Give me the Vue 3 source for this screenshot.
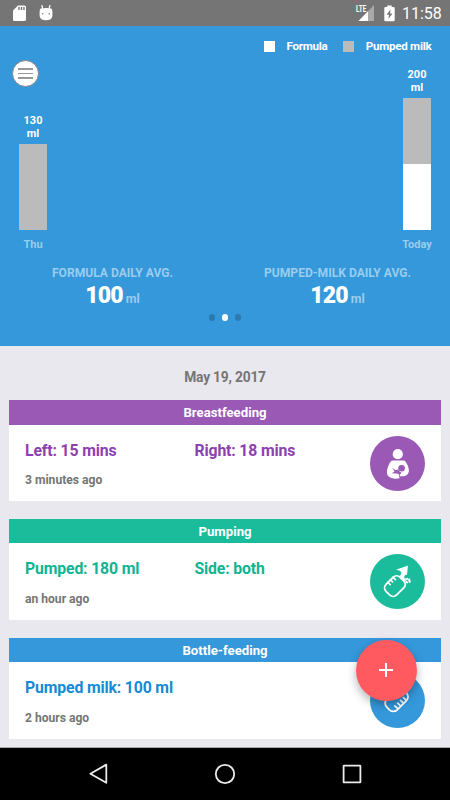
<script setup>
import { ref } from 'vue';

const legend = [
    { label: 'Formula', color: '#ffffff' },
    { label: 'Pumped milk', color: '#bbbbbb' },
];

// Segment heights are listed from top to bottom
const bars = [
    { day: 'Thu', amount: 130, segments: [{ color: '#bbbbbb', height: 85.5 }] },
    {
        day: 'Today',
        amount: 200,
        segments: [
            { color: '#bbbbbb', height: 66 },
            { color: '#ffffff', height: 65.5 },
        ],
    },
];

const averages = [
    { title: 'FORMULA DAILY AVG.', value: 100 },
    { title: 'PUMPED-MILK DAILY AVG.', value: 120 },
];

const activePage = ref(1);

const entries = [
    { type: 'breast', title: 'Breastfeeding', left: 'Left: 15 mins', right: 'Right: 18 mins', time: '3 minutes ago' },
    { type: 'pump', title: 'Pumping', left: 'Pumped: 180 ml', right: 'Side: both', time: 'an hour ago' },
    { type: 'bottle', title: 'Bottle-feeding', left: 'Pumped milk: 100 ml', right: '', time: '2 hours ago' },
];
</script>

<template>
    <div class="screen">
        <header class="status-bar">
            <svg class="sd" width="14" height="17" viewBox="0 0 14 17">
                <path d="M5 0.5H11.5Q13 0.5 13 2V14.5Q13 16 11.5 16H1.5Q0 16 0 14.5V5.5Z" fill="#fff" />
                <path d="M6 2v3M8.5 2v3M11 2v3" stroke="#757575" stroke-width="1.4" />
            </svg>
            <svg class="droid" width="14" height="17" viewBox="0 0 14 17">
                <path d="M2.8 0L3.8 4M11 0L10 4" stroke="#fff" stroke-width="1.2" />
                <path d="M1.6 3.6Q7 2.4 12.4 3.6Q13.4 4.4 13.4 7V11Q13 15.2 7 15.2Q1 15.2 0.6 11V7Q0.6 4.4 1.6 3.6Z" fill="#fff" />
                <circle cx="3.8" cy="8.7" r="0.8" fill="#757575" />
                <circle cx="10.2" cy="8.7" r="0.8" fill="#757575" />
            </svg>
            <svg class="signal" width="20" height="18" viewBox="0 0 20 18">
                <path d="M19 1V17H3.5Z" fill="#a9a9a9" />
                <path d="M13 7.2V17H3.5Z" fill="#fff" />
                <rect x="0" y="0" width="10.7" height="8.2" fill="#757575" />
                <text x="1" y="7.6" class="lte" textLength="10.2" lengthAdjust="spacingAndGlyphs">LTE</text>
            </svg>
            <svg class="battery" width="11" height="17" viewBox="0 0 11 17">
                <path d="M3.3 0.5H7.7V2H9.5Q10.7 2 10.7 3.2V15Q10.7 16.3 9.5 16.3H1.5Q0.3 16.3 0.3 15V3.2Q0.3 2 1.5 2H3.3Z" fill="#fff" />
                <path d="M6.6 4.2L2.6 9.8H5.1L4.4 14L8.5 8.4H6Z" fill="#757575" />
            </svg>
            <span class="clock">11:58</span>
        </header>

        <section class="hero">
            <button class="menu">
                <i></i><i></i><i></i>
            </button>
            <div class="legend">
                <span v-for="item in legend" :key="item.label" class="legend-item">
                    <span class="swatch" :style="{ background: item.color }"></span>
                    {{ item.label }}
                </span>
            </div>
            <div class="chart">
                <div v-for="bar in bars" :key="bar.day" class="bar">
                    <div class="bar-value">{{ bar.amount }}<br>ml</div>
                    <div
                        v-for="(segment, i) in bar.segments"
                        :key="i"
                        class="segment"
                        :style="{ height: segment.height + 'px', background: segment.color }"
                    ></div>
                    <div class="bar-day">{{ bar.day }}</div>
                </div>
            </div>
            <div class="averages">
                <div v-for="avg in averages" :key="avg.title" class="average">
                    <div class="avg-title">{{ avg.title }}</div>
                    <div class="avg-value"><b>{{ avg.value }}</b> ml</div>
                </div>
            </div>
            <div class="dots">
                <span v-for="n in 3" :key="n" class="dot" :class="{ active: n - 1 === activePage }"></span>
            </div>
        </section>

        <main class="timeline">
            <h2 class="date">May 19, 2017</h2>
            <article v-for="entry in entries" :key="entry.type" class="card" :class="entry.type">
                <h3 class="card-title">{{ entry.title }}</h3>
                <div class="card-body">
                    <div class="facts">
                        <div class="fact-row">
                            <span class="fact">{{ entry.left }}</span>
                            <span class="fact">{{ entry.right }}</span>
                        </div>
                        <div class="time">{{ entry.time }}</div>
                    </div>
                    <svg class="badge" width="55" height="55" viewBox="0 0 55 55">
                        <circle cx="27.5" cy="27.5" r="27.5" class="badge-bg" />
                        <g v-if="entry.type === 'breast'">
                            <circle cx="27.8" cy="18.2" r="5.1" fill="#fff" />
                            <path d="M22.5 24.5H33.5C36 24.5 38.9 31 38.9 34.5C38.9 38 36.5 40 33.5 40.2L29 40.3L30.3 42C27 43 23.5 42.8 21.5 42C18.5 41 16.7 39 16.9 36C17.1 32 20 24.5 22.5 24.5Z" fill="#fff" />
                            <circle cx="31.6" cy="32.2" r="3.3" class="badge-bg" />
                            <path d="M22 31.8L25.6 34.3L28.2 33.6Q29 35.8 31.6 36.7L29.4 39.3Q28.6 37.4 26.5 37.6L21.8 37.3L24.6 35.4Z" class="badge-bg" />
                            <path d="M29.2 38.8L30.2 42.6" class="badge-line" />
                        </g>
                        <g v-else-if="entry.type === 'pump'" fill="none" stroke="#fff" stroke-linecap="round">
                            <rect x="-10" y="-7.5" width="20" height="15" rx="5" transform="translate(24.9 32.1) rotate(-45)" stroke-width="1.8" />
                            <path d="M17.6 28.2l2.6 2.4M20.3 25.6l2.3 2.2M23.1 23.3l2.4 2.3" stroke-width="1.6" />
                            <path d="M26 15.8L38 11.5L37 20.8Q34.8 20.2 34.4 22.4L34 26L29.6 22.5Q31.8 20 31.2 18Q30 16.2 26 15.8Z" fill="#fff" stroke="none" />
                            <path d="M30.2 22L35.4 27" stroke-width="2.6" stroke-linecap="butt" />
                            <path d="M35.8 27.2L37.8 29M35.4 25.2L38 24.8M38.8 24.6L40 28.6" stroke-width="2" stroke-linecap="butt" />
                        </g>
                        <g v-else fill="none" stroke="#fff" stroke-linecap="round">
                            <rect x="-12" y="-7.4" width="24" height="14.8" rx="5.5" transform="translate(26.6 27) rotate(-45)" stroke-width="1.8" />
                            <path d="M27.3 35.2l-2.5-2.3M30.2 32.5l-2.5-2.4M33 29.6l-2.5-2.3M35.8 26.9l-2.4-2.2" stroke-width="1.7" />
                        </g>
                    </svg>
                </div>
            </article>
        </main>

        <button class="fab">
            <svg width="14" height="14" viewBox="0 0 14 14">
                <path d="M7 0V14M0 7H14" stroke="#fff" stroke-width="2" />
            </svg>
        </button>

        <nav class="nav-bar">
            <svg width="22" height="22" viewBox="0 0 22 22">
                <path d="M18.3 1.6V19.8L2.4 10.7Z" />
            </svg>
            <svg width="22" height="22" viewBox="0 0 22 22">
                <circle cx="11" cy="11" r="9.2" />
            </svg>
            <svg width="22" height="22" viewBox="0 0 22 22">
                <rect x="2.6" y="2.6" width="16.8" height="16.8" rx="0.5" />
            </svg>
        </nav>
    </div>
</template>

<style>
body {
    margin: 0;
}
</style>

<style scoped>
.screen {
    position: relative;
    width: 450px;
    height: 800px;
    overflow: hidden;
    display: flex;
    flex-direction: column;
    background: #e9e8ee;
    font-family: Roboto, 'Liberation Sans', sans-serif;
    font-weight: 700;
}

.status-bar {
    height: 26px;
    flex-shrink: 0;
    box-sizing: border-box;
    display: flex;
    align-items: center;
    padding: 0 9px 0 13px;
    background: #757575;
    color: #fff;
}

.droid {
    margin-left: 12px;
}

.signal {
    margin-left: auto;
}

.lte {
    font-size: 9px;
    font-weight: 700;
    fill: #fff;
}

.battery {
    margin: 0 7.5px 0 8.5px;
}

.clock {
    width: 39px;
    font-size: 16px;
    font-weight: 400;
    line-height: 26px;
    padding-top: 2px;
    text-align: right;
}

.hero {
    position: relative;
    height: 320px;
    flex-shrink: 0;
    background: #3498db;
    color: #fff;
}

/* Floats over the chart */
.menu {
    position: absolute;
    left: 11.5px;
    top: 34px;
    width: 27px;
    height: 27px;
    box-sizing: border-box;
    padding: 0;
    border: 1px solid #858585;
    border-radius: 50%;
    background: #fff;
    display: flex;
    flex-direction: column;
    align-items: center;
    justify-content: center;
    gap: 3px;
}

.menu i {
    width: 15px;
    height: 1.4px;
    background: #999;
}

.legend {
    display: flex;
    justify-content: flex-end;
    gap: 16px;
    padding: 14px 18.5px 0 0;
    height: 13px;
    font-size: 11.6px;
    line-height: 13px;
    letter-spacing: -0.25px;
}

.legend-item {
    display: flex;
    align-items: center;
    gap: 11.2px;
}

.swatch {
    width: 11px;
    height: 11px;
}

.chart {
    height: 198px;
    display: flex;
    justify-content: space-between;
    align-items: flex-end;
    padding: 0 13px;
}

.bar {
    width: 40px;
    display: flex;
    flex-direction: column;
    align-items: center;
    font-size: 11px;
    line-height: 13px;
    text-align: center;
}

.bar-value {
    margin-bottom: 4.5px;
}

.segment {
    width: 27.5px;
}

.bar-day {
    margin-top: 8.3px;
    color: #9accee;
}

.averages {
    display: flex;
    padding-top: 15px;
}

.average {
    flex: 1;
    text-align: center;
    color: #9accee;
}

.avg-title {
    font-size: 12.1px;
    line-height: 14px;
}

.avg-value {
    font-size: 12.4px;
    line-height: 26px;
    margin-top: 3px;
}

.avg-value b {
    font-size: 23px;
    letter-spacing: -0.8px;
    color: #fff;
}

.dots {
    display: flex;
    justify-content: center;
    gap: 6.5px;
    padding-top: 2px;
}

.dot {
    width: 6.6px;
    height: 6.6px;
    border-radius: 50%;
    background: #2a7aaf;
}

.dot.active {
    background: #fff;
}

.timeline {
    flex: 1;
    min-height: 0;
    overflow: hidden;
    padding: 0 9px;
}

.date {
    margin: 23px 0 15.2px;
    font-size: 13.8px;
    font-weight: 700;
    line-height: 16px;
    letter-spacing: -0.2px;
    text-align: center;
    color: #757575;
}

.card {
    height: 101px;
    margin-bottom: 17.8px;
    background: #fff;
}

.card-title {
    margin: 0;
    height: 24.5px;
    font-size: 13.2px;
    font-weight: 700;
    line-height: 26px;
    text-align: center;
    color: #fff;
}

.card-body {
    display: flex;
    justify-content: space-between;
    padding: 11px 16px 0;
}

.fact-row {
    display: flex;
    padding-top: 5px;
    line-height: 20px;
    font-size: 15.8px;
    letter-spacing: -0.15px;
}

.fact {
    min-width: 169.5px;
    white-space: nowrap;
}

.time {
    margin-top: 12.4px;
    font-size: 12.1px;
    line-height: 15px;
    color: #757575;
}

.badge {
    flex-shrink: 0;
}

.breast .card-title {
    background: #9b59b6;
}

.breast .fact {
    color: #8e3fb0;
}

.breast .badge-bg {
    fill: #9b59b6;
}

.breast .badge-line {
    stroke: #9b59b6;
    stroke-width: 0.8;
}

.pump .card-title {
    background: #1abc9c;
}

.pump .fact {
    color: #0fb492;
}

.pump .badge-bg {
    fill: #1abc9c;
}

.bottle .card-title {
    background: #3498db;
}

.bottle .fact {
    color: #158ad6;
}

.bottle .badge-bg {
    fill: #3498db;
}

.fab {
    position: absolute;
    left: 356px;
    top: 640px;
    width: 61px;
    height: 61px;
    padding: 0 1px 1px 0;
    border: none;
    border-radius: 50%;
    background: #ff5a5f;
    box-shadow: 0 4px 10px rgba(0, 0, 0, 0.3);
    display: flex;
    align-items: center;
    justify-content: center;
}

.nav-bar {
    height: 52px;
    flex-shrink: 0;
    display: flex;
    align-items: center;
    justify-content: center;
    gap: 104.5px;
    border-top: 1px solid #a9a8ad;
    background: #000;
}

.nav-bar svg {
    fill: none;
    stroke: #ebebeb;
    stroke-width: 1.8;
    stroke-linejoin: round;
}
</style>
